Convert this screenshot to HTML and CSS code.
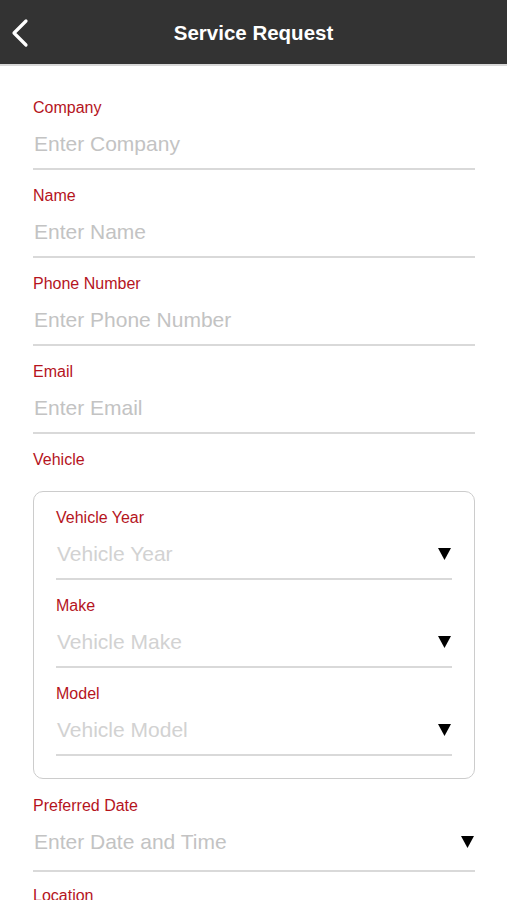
FILE: index.html
```html
<!DOCTYPE html>
<html lang="en">

<head>
    <meta charset="UTF-8">
    <title>Service Request</title>
    <link rel="stylesheet" href="styles.css">
</head>

<body>
    <!-- BARRA SUPERIORE -->
    <header class="topbar">
        <a class="back" href="#">
            <svg width="20" height="30" viewBox="0 0 20 30">
                <polyline points="16,3 4,15 16,27" fill="none" stroke="#fff" stroke-width="3.2" stroke-linecap="round" stroke-linejoin="round" />
            </svg>
        </a>
        <h1>Service Request</h1>
    </header>

    <main class="form">
        <div class="field">
            <label>Company</label>
            <div class="row"><span class="placeholder">Enter Company</span></div>
        </div>
        <div class="field">
            <label>Name</label>
            <div class="row"><span class="placeholder">Enter Name</span></div>
        </div>
        <div class="field">
            <label>Phone Number</label>
            <div class="row"><span class="placeholder">Enter Phone Number</span></div>
        </div>
        <div class="field">
            <label>Email</label>
            <div class="row"><span class="placeholder">Enter Email</span></div>
        </div>

        <!-- GRUPPO VEICOLO -->
        <div class="group-title">Vehicle</div>
        <div class="vehicle-box">
            <div class="field">
                <label>Vehicle Year</label>
                <div class="row">
                    <span class="placeholder light">Vehicle Year</span>
                    <svg class="arrow" width="13" height="12" viewBox="0 0 13 12"><polygon points="0,0 13,0 6.5,12" /></svg>
                </div>
            </div>
            <div class="field">
                <label>Make</label>
                <div class="row">
                    <span class="placeholder light">Vehicle Make</span>
                    <svg class="arrow" width="13" height="12" viewBox="0 0 13 12"><polygon points="0,0 13,0 6.5,12" /></svg>
                </div>
            </div>
            <div class="field">
                <label>Model</label>
                <div class="row">
                    <span class="placeholder light">Vehicle Model</span>
                    <svg class="arrow" width="13" height="12" viewBox="0 0 13 12"><polygon points="0,0 13,0 6.5,12" /></svg>
                </div>
            </div>
        </div>

        <div class="field date">
            <label>Preferred Date</label>
            <div class="row">
                <span class="placeholder">Enter Date and Time</span>
                <svg class="arrow" width="13" height="12" viewBox="0 0 13 12"><polygon points="0,0 13,0 6.5,12" /></svg>
            </div>
        </div>
        <div class="field">
            <label>Location</label>
            <div class="row"><span class="placeholder">Enter Location</span></div>
        </div>
    </main>
</body>

</html>
```

FILE: styles.css
```css
/* [STILE GENERALE] */
body {
    margin: 0;
    font-family: 'Liberation Sans', Arial, sans-serif;
    background: #fff;
}

/* [BARRA SUPERIORE] */
.topbar {
    height: 64px;
    background: #333333;
    border-bottom: 2px solid #d8d8d8;
    display: flex;
    align-items: center;
    justify-content: center;
    position: relative;
}

.topbar h1 {
    margin: 2px 0 0 0;
    color: #fff;
    font-size: 20.5px;
    font-weight: bold;
}

/* [FRECCIA INDIETRO] */
.back {
    position: absolute;
    left: 10px;
    top: 18px;
    display: flex;
}

/* [FORM] */
.form {
    padding: 32px 32px 0 33px;
}

.field {
    margin-bottom: 16px;
}

.field label {
    display: block;
    color: #b5141d;
    font-size: 16px;
    line-height: 20px;
}

.row {
    display: flex;
    align-items: center;
    justify-content: space-between;
    margin-top: 14px;
    padding-bottom: 12px;
    border-bottom: 2px solid #d9d9d9;
}

.placeholder {
    font-size: 21px;
    line-height: 24px;
    color: #c3c3c3;
    padding-left: 1px;
}

.placeholder.light {
    color: #d2d2d2;
}

.arrow {
    fill: #000;
    margin-right: 1px;
}

/* [GRUPPO VEICOLO] */
.group-title {
    color: #b5141d;
    font-size: 16px;
    line-height: 20px;
}

.vehicle-box {
    margin-top: 21px;
    border: 1px solid #cccccc;
    border-radius: 10px;
    padding: 16px 22px 6px 22px;
    margin-bottom: 17px;
}

.vehicle-box .field:last-child {
    margin-bottom: 16px;
}

/* [CAMPO DATA] */
.date {
    margin-bottom: 14px;
}

.date .row {
    padding-bottom: 16px;
}
```
